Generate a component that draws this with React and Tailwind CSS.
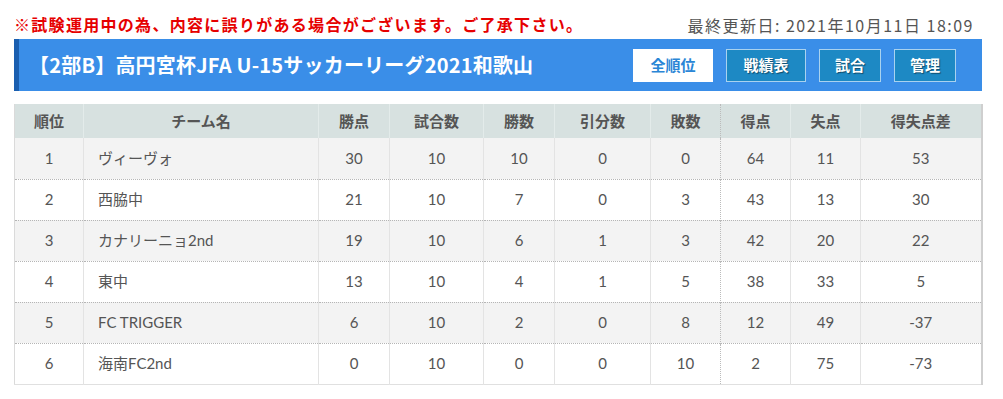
const teams = [
  { rank: 1, name: 'ヴィーヴォ', pts: 30, played: 10, win: 10, draw: 0, lose: 0, gf: 64, ga: 11, gd: 53 },
  { rank: 2, name: '西脇中', pts: 21, played: 10, win: 7, draw: 0, lose: 3, gf: 43, ga: 13, gd: 30 },
  { rank: 3, name: 'カナリーニョ2nd', pts: 19, played: 10, win: 6, draw: 1, lose: 3, gf: 42, ga: 20, gd: 22 },
  { rank: 4, name: '東中', pts: 13, played: 10, win: 4, draw: 1, lose: 5, gf: 38, ga: 33, gd: 5 },
  { rank: 5, name: 'FC TRIGGER', pts: 6, played: 10, win: 2, draw: 0, lose: 8, gf: 12, ga: 49, gd: -37 },
  { rank: 6, name: '海南FC2nd', pts: 0, played: 10, win: 0, draw: 0, lose: 10, gf: 2, ga: 75, gd: -73 }
];

const headers = ['順位', 'チーム名', '勝点', '試合数', '勝数', '引分数', '敗数', '得点', '失点', '得失点差'];
const widths = ['w-[69px]', 'w-[235px]', 'w-[71px]', 'w-[94px]', 'w-[71px]', 'w-[96px]', 'w-[70px]', 'w-[70px]', 'w-[70px]', 'w-[121px]'];

const App = () => {
  const cell = 'border-r border-[#e3e3e3] text-center';

  return (
    <div className="w-[1003px] h-[399px] bg-white font-['Lato','Noto_Sans_CJK_JP',sans-serif] text-[#555]">
      <div className="flex items-center justify-between pl-[14px] pr-[29px] pt-[10px] h-[39px]">
        <p className="text-[#e60000] font-bold text-[16px] tracking-[1.3px]">
          ※試験運用中の為、内容に誤りがある場合がございます。ご了承下さい。
        </p>
        <p className="text-[16px] tracking-[1.5px] text-[#555] font-['Noto_Sans_CJK_JP',sans-serif]">最終更新日: 2021年10月11日 18:09</p>
      </div>

      <div className="mx-[14px] mr-[21px] mt-0 h-[52px] bg-[#3a8ee8] border-l-[5px] border-[#1a5fb0] flex items-center justify-between pl-[10px] pr-[26px]">
        <h1 className="text-white font-bold text-[20px] tracking-[0.2px] font-['Noto_Sans_CJK_JP',sans-serif]">【2部B】高円宮杯JFA U-15サッカーリーグ2021和歌山</h1>
        <div className="flex gap-[13px]">
          <button className="h-[33px] w-[80px] bg-white text-[#2a86d6] font-bold text-[15px] border border-white">
            全順位
          </button>
          {['戦績表', '試合', '管理'].map((label) => (
            <button
              key={label}
              className={`h-[33px] ${label === '戦績表' ? 'w-[80px]' : 'w-[62px]'} bg-[#1d89c4] text-white font-bold text-[15px] border border-[#a9d2ef] [text-shadow:1px_1px_1px_rgba(0,0,0,0.45)]`}
            >
              {label}
            </button>
          ))}
        </div>
      </div>

      <table className="ml-[14px] mt-[13px] w-[967px] border-collapse table-fixed border-l border-l-[#dadada] border-r-2 border-r-[#cfcfcf] border-b border-b-[#e0e0e0]">
        <thead>
          <tr className="h-[34px] bg-[#d7e1e0]">
            {headers.map((h, i) => (
              <th
                key={h}
                className={`${widths[i]} font-bold text-[15px] text-[#555] text-center ${i === 6 ? 'border-r border-dotted border-r-[#bbb]' : 'border-r border-[#e3ebea]'}`}
              >
                {h}
              </th>
            ))}
          </tr>
        </thead>
        <tbody>
          {teams.map((t, idx) => (
            <tr
              key={t.rank}
              className={`h-[41px] text-[15px] ${idx % 2 === 0 ? 'bg-[#f3f3f3]' : 'bg-white'} ${idx < teams.length - 1 ? 'border-b border-dotted border-b-[#b5b5b5]' : ''}`}
            >
              <td className={cell}>{t.rank}</td>
              <td className="border-r border-[#e3e3e3] text-left pl-[14px]">{t.name}</td>
              <td className={cell}>{t.pts}</td>
              <td className={cell}>{t.played}</td>
              <td className={cell}>{t.win}</td>
              <td className={cell}>{t.draw}</td>
              <td className="border-r border-dotted border-r-[#bbb] text-center">{t.lose}</td>
              <td className={cell}>{t.gf}</td>
              <td className={cell}>{t.ga}</td>
              <td className="text-center">{t.gd}</td>
            </tr>
          ))}
        </tbody>
      </table>
    </div>
  );
};

export default App;
